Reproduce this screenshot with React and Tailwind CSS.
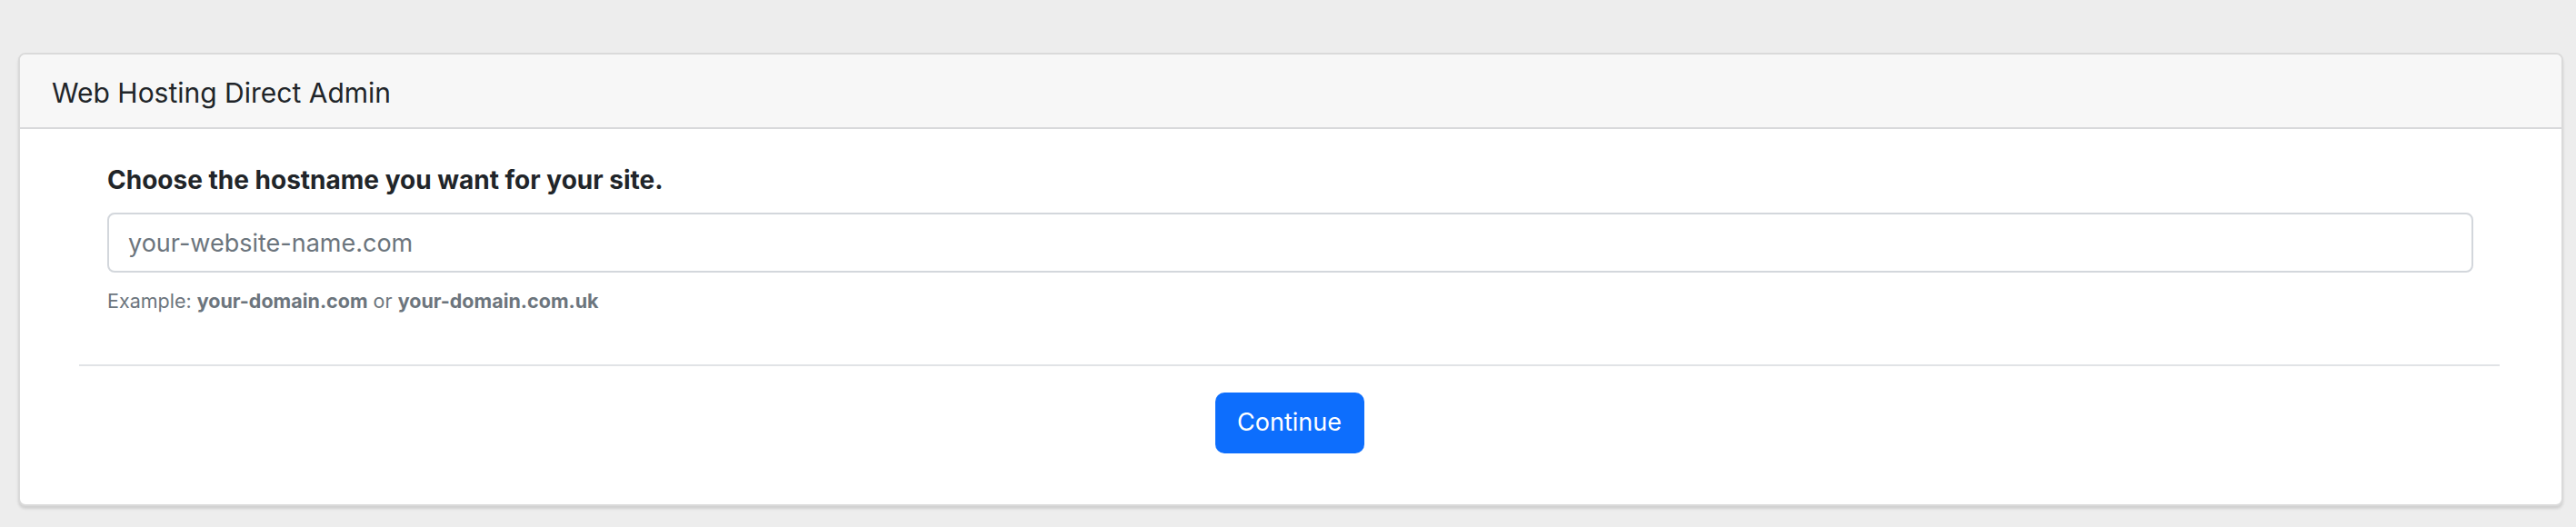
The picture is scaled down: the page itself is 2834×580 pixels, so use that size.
import React from 'react';

const App = () => {
    return (
        <div className="min-h-[580px] bg-[#ededed] pt-[58px] pl-[20px] pr-[14px] font-['Inter',sans-serif] text-[#212529]">
            <div className="bg-white border-2 border-[#dadada] rounded-[8px] shadow-[0_3px_3px_rgba(0,0,0,0.12)] overflow-hidden">
                <div className="h-[82px] bg-[#f7f7f7] border-b-2 border-[#d8d9db] pt-[24px] px-[35px]">
                    <h1 className="text-[30px] leading-[36px] font-normal">Web Hosting Direct Admin</h1>
                </div>

                <div className="pt-[40px] pb-[56px] pl-[65px] pr-[68px]">
                    <div className="pl-[31px] pr-[29px]">
                        <label htmlFor="hostname" className="block text-[28px] leading-[32px] font-bold">
                            Choose the hostname you want for your site.
                        </label>
                        <input
                            id="hostname"
                            type="text"
                            placeholder="your-website-name.com"
                            className="mt-[20px] block w-full h-[66px] border-2 border-[#d3d7dc] rounded-[8px] pl-[21px] pr-[20px] text-[27px] text-[#212529] placeholder:text-[#6c757d] outline-none"
                        />
                        <p className="mt-[18px] text-[21.5px] leading-[26px] text-[#6c757d]">
                            Example: <b className="font-bold">your-domain.com</b> or <b className="font-bold">your-domain.com.uk</b>
                        </p>
                    </div>

                    <hr className="mt-[57px] border-0 border-t-2 border-[#e1e3e6]" />

                    <div className="mt-[29px] flex justify-center">
                        <button className="w-[164px] h-[67px] bg-[#0d6efd] text-white text-[27px] rounded-[10px]">
                            Continue
                        </button>
                    </div>
                </div>
            </div>
        </div>
    );
};

export default App;
